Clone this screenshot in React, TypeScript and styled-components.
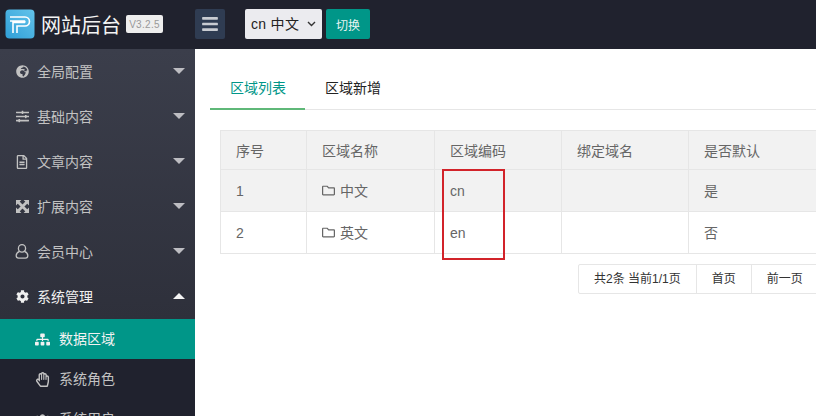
import { FC, ReactNode } from "react";
import styled, { createGlobalStyle } from "styled-components";
import {
  FaBars,
  FaCog,
  FaGlobeAfrica,
  FaRegFileAlt,
  FaRegFolder,
  FaRegHandPaper,
  FaSitemap,
  FaSlidersH,
  FaUsers,
} from "react-icons/fa";

const UserOutline: FC = () => (
  <svg width="14" height="15" viewBox="0 0 14 15" fill="none" stroke="currentColor" strokeWidth="1.3">
    <ellipse cx="7" cy="4.4" rx="3.6" ry="3.7" />
    <path d="M4.6 7.4C2.6 8.2 1.2 9.8 1.2 11.6c0 1.6 1 2.6 2.4 2.6h6.8c1.4 0 2.4-1 2.4-2.6 0-1.8-1.4-3.4-3.4-4.2" />
  </svg>
);

const ArrowsAlt: FC = () => (
  <svg width="13" height="13" viewBox="0 0 14 14" fill="currentColor">
    <path d="M0 0h5.800L0 5.800zM14 0v5.800L8.200 0zM0 14V8.200L5.800 14zM14 14H8.200L14 8.200z" />
    <path d="M2.500 2.500l9 9M11.500 2.500l-9 9" stroke="currentColor" strokeWidth="3" />
  </svg>
);

const LogoMark: FC = () => (
  <svg width="30" height="30" viewBox="0 0 30 30">
    <defs>
      <linearGradient id="logoFill" x1="0" y1="1" x2="1" y2="0">
        <stop offset="0" stopColor="#2f9fd8" />
        <stop offset="1" stopColor="#63c3ea" />
      </linearGradient>
    </defs>
    <rect width="29" height="29" x="0.5" y="0.5" rx="4" fill="url(#logoFill)" />
    <path
      d="M5 8h15a4.500 4.500 0 0 1 0 9h-8v7M5 12h14.500a1 1 0 0 1 0 1.500H8v10.500"
      fill="none"
      stroke="#fff"
      strokeWidth="1.600"
    />
  </svg>
);

const Chevron: FC = () => (
  <svg width="9" height="6" viewBox="0 0 9 6" fill="none" stroke="#333" strokeWidth="1.400">
    <path d="M1 1l3.500 3.500L8 1" />
  </svg>
);

const menu: { label: string; icon: ReactNode; open?: boolean }[] = [
  { label: "全局配置", icon: <FaGlobeAfrica size={13} /> },
  { label: "基础内容", icon: <FaSlidersH size={13} /> },
  { label: "文章内容", icon: <FaRegFileAlt size={14} /> },
  { label: "扩展内容", icon: <ArrowsAlt /> },
  { label: "会员中心", icon: <UserOutline /> },
  { label: "系统管理", icon: <FaCog size={13} />, open: true },
];

const subMenu: { label: string; icon: ReactNode; active?: boolean }[] = [
  { label: "数据区域", icon: <FaSitemap size={15} />, active: true },
  { label: "系统角色", icon: <FaRegHandPaper size={15} /> },
  { label: "系统用户", icon: <FaUsers size={15} /> },
];

const rows = [
  { id: 1, name: "中文", code: "cn", isDefault: "是", hovered: true },
  { id: 2, name: "英文", code: "en", isDefault: "否", hovered: false },
];

export default function App() {
  return (
    <Page>
      <GlobalStyle />
      <TopBar>
        <LogoMark />
        <SiteTitle>网站后台</SiteTitle>
        <VersionBadge>V3.2.5</VersionBadge>
        <MenuToggle>
          <FaBars size={18} />
        </MenuToggle>
        <SelectBox>
          <AreaSelect defaultValue="cn">
            <option value="cn">cn 中文</option>
            <option value="en">en 英文</option>
          </AreaSelect>
          <SelectArrow>
            <Chevron />
          </SelectArrow>
        </SelectBox>
        <SwitchButton>切换</SwitchButton>
      </TopBar>
      <Body>
        <Sidebar>
          <NavGroup>
            {menu.map((item) => (
              <NavItem key={item.label} $open={item.open}>
                <NavIcon>{item.icon}</NavIcon>
                <NavLabel>{item.label}</NavLabel>
                <Caret $open={item.open} />
              </NavItem>
            ))}
          </NavGroup>
          <SubNav>
            {subMenu.map((item) => (
              <SubItem key={item.label} $active={item.active}>
                <NavIcon>{item.icon}</NavIcon>
                <SubLabel>{item.label}</SubLabel>
              </SubItem>
            ))}
          </SubNav>
        </Sidebar>
        <Main>
          <Tabs>
            <Tab $active>区域列表</Tab>
            <Tab>区域新增</Tab>
          </Tabs>
          <TableArea>
            <DataTable>
              <colgroup>
                <col width={86} />
                <col width={128} />
                <col width={127} />
                <col width={127} />
                <col width={140} />
              </colgroup>
              <thead>
                <tr>
                  <HeadCell>序号</HeadCell>
                  <HeadCell>区域名称</HeadCell>
                  <HeadCell>区域编码</HeadCell>
                  <HeadCell>绑定域名</HeadCell>
                  <HeadCell>是否默认</HeadCell>
                </tr>
              </thead>
              <tbody>
                {rows.map((row) => (
                  <BodyRow key={row.id} $hovered={row.hovered}>
                    <BodyCell>{row.id}</BodyCell>
                    <BodyCell $cjk>
                      <FolderIcon>
                        <FaRegFolder size={13} />
                      </FolderIcon>
                      {row.name}
                    </BodyCell>
                    <BodyCell>{row.code}</BodyCell>
                    <BodyCell />
                    <BodyCell $cjk>{row.isDefault}</BodyCell>
                  </BodyRow>
                ))}
              </tbody>
            </DataTable>
            <Annotation />
          </TableArea>
          <Pager>
            <PagerCell>共2条 当前1/1页</PagerCell>
            <PagerCell>首页</PagerCell>
            <PagerCell>前一页</PagerCell>
          </Pager>
        </Main>
      </Body>
    </Page>
  );
}

const GlobalStyle = createGlobalStyle`
  html, body {
    margin: 0;
    padding: 0;
    background: #fff;
  }
  body {
    font-family: "Liberation Sans", "Noto Sans CJK SC", sans-serif;
    font-size: 14px;
    color: #666;
  }
`;

const Page = styled.div`
  width: 816px;
  height: 416px;
  display: flex;
  flex-direction: column;
  overflow: hidden;
`;

const TopBar = styled.header`
  flex: 0 0 49px;
  display: flex;
  align-items: center;
  padding-left: 5px;
  padding-bottom: 1px;
  box-sizing: border-box;
  background: #20222e;
`;

const SiteTitle = styled.div`
  margin-left: 6px;
  font-size: 20px;
  color: #f4f4f4;
`;

const VersionBadge = styled.span`
  margin-left: 5px;
  width: 37px;
  height: 18px;
  display: flex;
  align-items: center;
  justify-content: center;
  border-radius: 2px;
  background: #eeeeee;
  color: #999;
  font-size: 10px;
  letter-spacing: 0.3px;
`;

const MenuToggle = styled.button`
  margin-left: 32px;
  width: 30px;
  height: 30px;
  padding: 0;
  display: flex;
  align-items: center;
  justify-content: center;
  border: none;
  border-radius: 2px;
  background: #2f3c52;
  color: #c9ccd2;
`;

const SelectBox = styled.div`
  position: relative;
  margin-left: 20px;
  width: 77px;
  height: 30px;
`;

const AreaSelect = styled.select`
  width: 100%;
  height: 100%;
  padding: 0 0 0 6px;
  appearance: none;
  border: none;
  border-radius: 2px;
  background: #ebebef;
  color: #222;
  font-family: inherit;
  font-size: 14px;
  letter-spacing: 0.3px;
`;

const SelectArrow = styled.span`
  position: absolute;
  right: 6px;
  top: 12px;
  display: flex;
  pointer-events: none;
`;

const SwitchButton = styled.button`
  margin-left: 4px;
  width: 44px;
  height: 30px;
  padding: 0;
  border: none;
  border-radius: 2px;
  background: #009688;
  color: #e8f4f2;
  font-family: inherit;
  font-size: 12px;
`;

const Body = styled.div`
  flex: 1;
  min-height: 0;
  display: flex;
`;

const Sidebar = styled.aside`
  flex: 0 0 195px;
  overflow: hidden;
  background: #20222e;
`;

const NavGroup = styled.nav`
  background: linear-gradient(#3b3e4b, #2e303b);
`;

const NavItem = styled.div<{ $open?: boolean }>`
  height: 45px;
  display: flex;
  align-items: center;
  padding: 0 10px 0 15px;
  color: ${(p) => (p.$open ? "#f0f0f0" : "#c2c2c2")};
`;

const NavIcon = styled.span`
  flex: 0 0 14px;
  display: flex;
  align-items: center;
  justify-content: center;
`;

const NavLabel = styled.span`
  margin-left: 8px;
  padding-bottom: 2px;
  flex: 1;
`;

const Caret = styled.i<{ $open?: boolean }>`
  width: 0;
  height: 0;
  border-left: 6px solid transparent;
  border-right: 6px solid transparent;
  border-top: ${(p) => (p.$open ? "none" : "6px solid #bdbdc2")};
  border-bottom: ${(p) => (p.$open ? "6px solid #f4f4f4" : "none")};
  margin-top: -2px;
`;

const SubNav = styled.div`
  background: #20222e;
`;

const SubItem = styled.div<{ $active?: boolean }>`
  height: 40px;
  display: flex;
  align-items: center;
  padding-left: 35px;
  background: ${(p) => (p.$active ? "#009688" : "transparent")};
  color: ${(p) => (p.$active ? "#f2f2f2" : "#c2c2c2")};
`;

const SubLabel = styled.span`
  margin-left: 9px;
  padding-bottom: 2px;
`;

const Main = styled.main`
  flex: 1;
  min-width: 0;
  overflow: hidden;
  padding-top: 20px;
  background: #fff;
`;

const Tabs = styled.div`
  height: 40px;
  margin-left: 15px;
  display: flex;
  border-bottom: 1px solid #e6e6e6;
`;

const Tab = styled.div<{ $active?: boolean }>`
  height: 41px;
  padding: 0 19px 0 20px;
  line-height: 39px;
  box-sizing: border-box;
  color: ${(p) => (p.$active ? "#009688" : "#222")};
  border-bottom: 2px solid ${(p) => (p.$active ? "#5fb878" : "transparent")};
  margin-bottom: -1px;
`;

const TableArea = styled.div`
  position: relative;
  margin: 20px 0 0 25px;
  width: 608px;
`;

const DataTable = styled.table`
  width: 608px;
  table-layout: fixed;
  border-collapse: collapse;
  border-top: 1px solid #e6e6e6;
  border-left: 1px solid #e6e6e6;
`;

const HeadCell = styled.th`
  height: 39px;
  padding: 0 15px;
  box-sizing: border-box;
  background: #f2f2f2;
  border: 1px solid #e6e6e6;
  font-weight: 400;
  text-align: left;
  color: #666;
`;

const BodyRow = styled.tr<{ $hovered?: boolean }>`
  background: ${(p) => (p.$hovered ? "#f2f2f2" : "#fff")};
`;

const BodyCell = styled.td<{ $cjk?: boolean }>`
  height: 42px;
  padding: 0 15px ${(p) => (p.$cjk ? "2px" : "0")};
  box-sizing: border-box;
  border: 1px solid #e6e6e6;
  color: #666;
`;

const FolderIcon = styled.span`
  margin-right: 5px;
  vertical-align: -1px;
`;

const Annotation = styled.div`
  position: absolute;
  left: 222px;
  top: 39px;
  width: 63px;
  height: 91px;
  box-sizing: border-box;
  border: 2px solid #d2232a;
`;

const Pager = styled.div`
  margin: 10px 0 0 383px;
  height: 30px;
  display: flex;
  width: max-content;
  border: 1px solid #e6e6e6;
  border-radius: 2px;
  box-sizing: border-box;
`;

const PagerCell = styled.span`
  padding: 0 15px;
  line-height: 28px;
  font-size: 12px;
  color: #333;
  white-space: nowrap;
  & + & {
    border-left: 1px solid #e6e6e6;
  }
`;
